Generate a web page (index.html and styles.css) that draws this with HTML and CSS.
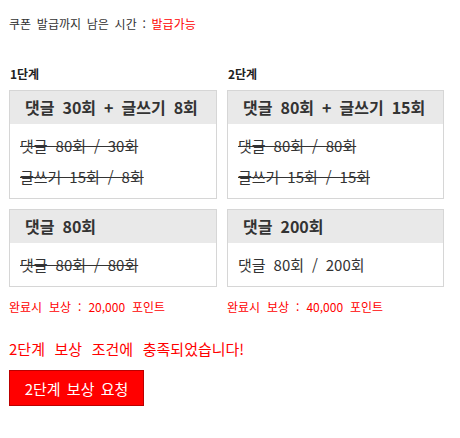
FILE: index.html
```html
<!DOCTYPE html>
<html lang="ko">
<head>
<meta charset="utf-8">
<link rel="stylesheet" href="styles.css">
</head>
<body>
<div class="page">
  <p class="timer">쿠폰 발급까지 남은 시간 : <span class="red">발급가능</span></p>
  <div class="stages">
    <div class="label">1단계</div>
    <div class="label">2단계</div>
    <div class="box">
      <div class="head">댓글 30회 + 글쓰기 8회</div>
      <div class="body">
        <div class="done">댓글 80회 / 30회</div>
        <div class="done">글쓰기 15회 / 8회</div>
      </div>
    </div>
    <div class="box">
      <div class="head">댓글 80회 + 글쓰기 15회</div>
      <div class="body">
        <div class="done">댓글 80회 / 80회</div>
        <div class="done">글쓰기 15회 / 15회</div>
      </div>
    </div>
    <div class="box">
      <div class="head">댓글 80회</div>
      <div class="body">
        <div class="done">댓글 80회 / 80회</div>
      </div>
    </div>
    <div class="box">
      <div class="head">댓글 200회</div>
      <div class="body">
        <div>댓글 80회 / 200회</div>
      </div>
    </div>
    <div class="reward">완료시 보상 : 20,000 포인트</div>
    <div class="reward">완료시 보상 : 40,000 포인트</div>
  </div>
  <p class="msg">2단계 보상 조건에 충족되었습니다!</p>
  <div><button class="btn">2단계 보상 요청</button></div>
</div>
</body>
</html>
```
FILE: styles.css
```css
* { box-sizing: border-box; }
html, body { margin: 0; padding: 0; background: #fff; }
body {
  font-family: "Noto Sans CJK KR", "Noto Sans", sans-serif;
  color: #333;
}
.page { padding: 16px 0 0 9px; }
.timer {
  margin: 0;
  font-size: 12px;
  line-height: 16px;
  word-spacing: 0.2em;
  color: #333;
}
.red { color: #f00; }
.stages {
  margin-top: 34px;
  display: grid;
  grid-template-columns: 208px 217px;
  column-gap: 10px;
  row-gap: 10px;
}
.label {
  font-size: 12px;
  font-weight: bold;
  line-height: 16px;
  padding-left: 1px;
  margin-bottom: -2px;
  color: #222;
}
.box {
  border: 1px solid #d6d6d6;
  background: #fff;
}
.head {
  background: #e9e9e9;
  height: 33px;
  line-height: 33px;
  padding-left: 15px;
  font-size: 16px;
  font-weight: bold;
  word-spacing: 0.22em;
  color: #333;
}
.body {
  padding: 6px 10px 6px;
  font-size: 15px;
  line-height: 31px;
  word-spacing: 0.25em;
  color: #333;
}
.done { text-decoration: line-through; }
.reward {
  margin-top: 2px;
  font-size: 12px;
  line-height: 16px;
  word-spacing: 0.3em;
  color: #f00;
}
.msg {
  margin: 24px 0 0;
  font-size: 15px;
  line-height: 20px;
  word-spacing: 0.36em;
  color: #f00;
}
.btn {
  display: block;
  margin-top: 11px;
  width: 135px;
  height: 36px;
  background: #f00;
  border: 1px solid #b00;
  color: #fff;
  font-family: "Noto Sans CJK KR", "Noto Sans", sans-serif;
  font-size: 15px;
  word-spacing: 0.14em;
  padding: 0;
  cursor: pointer;
}
```
